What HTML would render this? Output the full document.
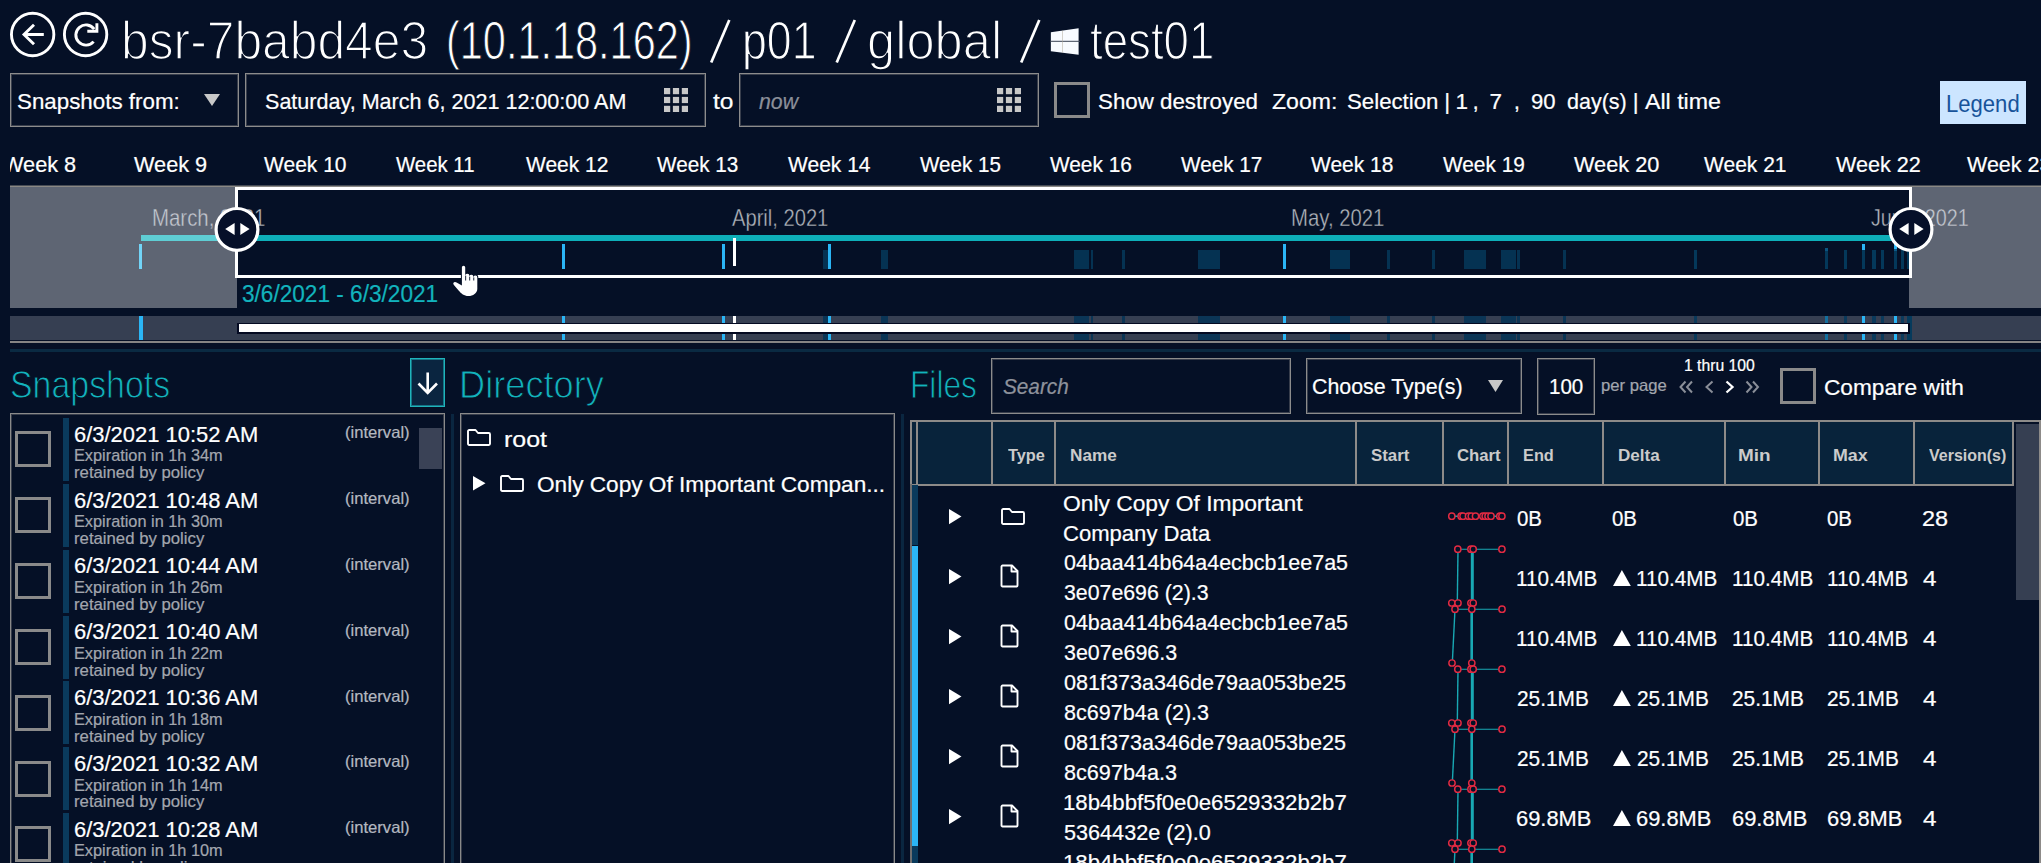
<!DOCTYPE html>
<html><head><meta charset="utf-8"><title>Snapshots</title><style>
html,body{margin:0;padding:0;}
html{width:2041px;height:863px;overflow:hidden;background:#051026;}
body{width:2041px;height:863px;overflow:hidden;background:#051026;position:relative;font-family:"Liberation Sans",sans-serif;}
.a{position:absolute;box-sizing:border-box;}
.t{position:absolute;white-space:pre;transform-origin:0 0;}
svg{position:absolute;overflow:visible;}
</style></head><body>
<div class="a" style="left:0;top:0;width:2041px;height:863px;overflow:hidden;">
<svg style="left:0;top:0" width="120" height="70" viewBox="0 0 120 70" fill="none" stroke="#fff" stroke-width="2.9">
<circle cx="32.65" cy="34.5" r="21.2"/>
<path d="M43.8 34.5H24.2M34 24.7L24 34.5L34 44.2" stroke-linejoin="miter"/>
<circle cx="85.6" cy="34.5" r="21.2"/>
<path d="M93.6 41.6A10.1 10.1 0 1 1 94.2 29.2"/>
<path d="M96.9 23.2V31.3H87.3"/>
</svg>
<span class="t" id="t1" style="left:121.14px;top:10px;font-size:54px;line-height:60px;color:#fff;-webkit-text-stroke:1.6px #051026;transform:scaleX(0.9216);">bsr-7babd4e3</span>
<span class="t" id="t2" style="left:445.56px;top:10px;font-size:54px;line-height:60px;color:#fff;-webkit-text-stroke:1.0px #051026;transform:scaleX(0.7676);">(10.1.18.162)</span>
<span class="t" id="t3" style="left:742.21px;top:10px;font-size:54px;line-height:60px;color:#fff;-webkit-text-stroke:1.3px #051026;transform:scaleX(0.8281);">p01</span>
<span class="t" id="t4" style="left:867.17px;top:10px;font-size:54px;line-height:60px;color:#fff;-webkit-text-stroke:1.6px #051026;transform:scaleX(0.9379);">global</span>
<svg style="left:0;top:0" width="1100" height="70" stroke="#fff" stroke-width="2.7" fill="none"><path d="M711.2 62.5L729.3 20"/><path d="M836.7 62.5L854.8 20"/><path d="M1021.2 62.5L1039.3 20"/></svg>
<svg style="left:1050px;top:27px" width="30" height="29" viewBox="1050 27 30 29">
<polygon points="1050.85,32.2 1078.6,28.2 1078.6,54.8 1050.85,51.3" fill="#f8fbff"/>
<rect x="1050" y="40.8" width="30" height="1" fill="#3a4254"/>
<rect x="1062.5" y="30.6" width="0.5" height="22.2" fill="#b0a898"/>
</svg>
<span class="t" id="t5" style="left:1089.8px;top:10px;font-size:54px;line-height:60px;color:#fff;-webkit-text-stroke:1.4px #051026;transform:scaleX(0.8453);">test01</span>
<div class="a" style="left:10px;top:73px;width:229px;height:54px;border:1px solid #8c8c8c;box-shadow:inset 0 0 0 1px rgba(140,140,140,0.38);"></div>
<span class="t" id="t6" style="left:17.3px;top:89px;font-size:22.5px;line-height:25px;color:#fff;-webkit-text-stroke:0.22px #fff;transform:scaleX(0.9932);">Snapshots from:</span>
<svg style="left:204px;top:94px" width="16" height="12"><polygon points="0,0 16,0 8,12" fill="#c8c8c8"/></svg>
<div class="a" style="left:245px;top:73px;width:461px;height:54px;border:1px solid #8c8c8c;box-shadow:inset 0 0 0 1px rgba(140,140,140,0.38);"></div>
<span class="t" id="t7" style="left:264.83px;top:89px;font-size:22.5px;line-height:25px;color:#fff;-webkit-text-stroke:0.22px #fff;transform:scaleX(0.9579);">Saturday, March 6, 2021 12:00:00 AM</span>
<svg style="left:664.3px;top:88px" width="25" height="25" fill="#c8c8c8"><rect x="0.0" y="0.0" width="6.2" height="6.2"/><rect x="0.0" y="8.9" width="6.2" height="6.2"/><rect x="0.0" y="17.8" width="6.2" height="6.2"/><rect x="8.9" y="0.0" width="6.2" height="6.2"/><rect x="8.9" y="8.9" width="6.2" height="6.2"/><rect x="8.9" y="17.8" width="6.2" height="6.2"/><rect x="17.8" y="0.0" width="6.2" height="6.2"/><rect x="17.8" y="8.9" width="6.2" height="6.2"/><rect x="17.8" y="17.8" width="6.2" height="6.2"/></svg>
<span class="t" id="t8" style="left:713.0px;top:89px;font-size:22.5px;line-height:25px;color:#fff;-webkit-text-stroke:0.22px #fff;transform:scaleX(1.0923);">to</span>
<div class="a" style="left:739px;top:73px;width:300px;height:54px;border:1px solid #8c8c8c;box-shadow:inset 0 0 0 1px rgba(140,140,140,0.38);"></div>
<span class="t" id="t9" style="left:759.17px;top:89px;font-size:22.5px;line-height:25px;color:#8b8f99;font-style:italic;-webkit-text-stroke:0.22px #8b8f99;transform:scaleX(0.9467);">now</span>
<svg style="left:996.7px;top:88px" width="25" height="25" fill="#c8c8c8"><rect x="0.0" y="0.0" width="6.2" height="6.2"/><rect x="0.0" y="8.9" width="6.2" height="6.2"/><rect x="0.0" y="17.8" width="6.2" height="6.2"/><rect x="8.9" y="0.0" width="6.2" height="6.2"/><rect x="8.9" y="8.9" width="6.2" height="6.2"/><rect x="8.9" y="17.8" width="6.2" height="6.2"/><rect x="17.8" y="0.0" width="6.2" height="6.2"/><rect x="17.8" y="8.9" width="6.2" height="6.2"/><rect x="17.8" y="17.8" width="6.2" height="6.2"/></svg>
<div class="a" style="left:1054px;top:82px;width:36px;height:35.5px;border:3px solid #8a8a8a;"></div>
<span class="t" id="t10" style="left:1098.3px;top:89px;font-size:22.5px;line-height:25px;color:#fff;-webkit-text-stroke:0.22px #fff;transform:scaleX(0.9913);">Show destroyed</span>
<span class="t" id="t11" style="left:1271.78px;top:89px;font-size:22.5px;line-height:25px;color:#fff;-webkit-text-stroke:0.22px #fff;transform:scaleX(1.0241);">Zoom:</span>
<span class="t" id="t12" style="left:1347.31px;top:89px;font-size:22.5px;line-height:25px;color:#fff;-webkit-text-stroke:0.22px #fff;transform:scaleX(0.9879);">Selection</span>
<span class="t" id="t13" style="left:1444.24px;top:89px;font-size:22.5px;line-height:25px;color:#fff;-webkit-text-stroke:0.22px #fff;">|</span>
<span class="t" id="t14" style="left:1455.59px;top:89px;font-size:22.5px;line-height:25px;color:#fff;-webkit-text-stroke:0.22px #fff;">1</span>
<span class="t" id="t15" style="left:1472.54px;top:89px;font-size:22.5px;line-height:25px;color:#fff;-webkit-text-stroke:0.22px #fff;">,</span>
<span class="t" id="t16" style="left:1489.45px;top:89px;font-size:22.5px;line-height:25px;color:#fff;-webkit-text-stroke:0.22px #fff;">7</span>
<span class="t" id="t17" style="left:1513.74px;top:89px;font-size:22.5px;line-height:25px;color:#fff;-webkit-text-stroke:0.22px #fff;">,</span>
<span class="t" id="t18" style="left:1531.46px;top:89px;font-size:22.5px;line-height:25px;color:#fff;-webkit-text-stroke:0.22px #fff;transform:scaleX(0.9824);">90</span>
<span class="t" id="t19" style="left:1567.33px;top:89px;font-size:22.5px;line-height:25px;color:#fff;-webkit-text-stroke:0.22px #fff;transform:scaleX(0.9564);">day(s)</span>
<span class="t" id="t20" style="left:1632.84px;top:89px;font-size:22.5px;line-height:25px;color:#fff;-webkit-text-stroke:0.22px #fff;">|</span>
<span class="t" id="t21" style="left:1644.5px;top:89px;font-size:22.5px;line-height:25px;color:#fff;-webkit-text-stroke:0.22px #fff;transform:scaleX(1.0295);">All time</span>
<div class="a" style="left:1940px;top:81px;width:86px;height:42.5px;background:#cce5ff;"></div>
<span class="t" id="t22" style="left:1946.08px;top:91px;font-size:23px;line-height:26px;color:#17539a;-webkit-text-stroke:0px #000;transform:scaleX(0.9598);">Legend</span>
<div class="a" style="left:10px;top:145px;width:200px;height:40px;overflow:hidden;"><span class="t" id="t23" style="left:-7.0px;top:7px;font-size:22px;line-height:25px;color:#fff;-webkit-text-stroke:0.22px #fff;transform:scaleX(0.9864);">Week 8</span></div>
<span class="t" id="t24" style="left:133.75px;top:152px;font-size:22px;line-height:25px;color:#fff;-webkit-text-stroke:0.22px #fff;transform:scaleX(0.9864);">Week 9</span>
<span class="t" id="t25" style="left:264.0px;top:152px;font-size:22px;line-height:25px;color:#fff;-webkit-text-stroke:0.22px #fff;transform:scaleX(0.9549);">Week 10</span>
<span class="t" id="t26" style="left:395.5px;top:152px;font-size:22px;line-height:25px;color:#fff;-webkit-text-stroke:0.22px #fff;transform:scaleX(0.9261);">Week 11</span>
<span class="t" id="t27" style="left:526.0px;top:152px;font-size:22px;line-height:25px;color:#fff;-webkit-text-stroke:0.22px #fff;transform:scaleX(0.9529);">Week 12</span>
<span class="t" id="t28" style="left:657.0px;top:152px;font-size:22px;line-height:25px;color:#fff;-webkit-text-stroke:0.22px #fff;transform:scaleX(0.9412);">Week 13</span>
<span class="t" id="t29" style="left:787.5px;top:152px;font-size:22px;line-height:25px;color:#fff;-webkit-text-stroke:0.22px #fff;transform:scaleX(0.9549);">Week 14</span>
<span class="t" id="t30" style="left:919.5px;top:152px;font-size:22px;line-height:25px;color:#fff;-webkit-text-stroke:0.22px #fff;transform:scaleX(0.9354);">Week 15</span>
<span class="t" id="t31" style="left:1050.0px;top:152px;font-size:22px;line-height:25px;color:#fff;-webkit-text-stroke:0.22px #fff;transform:scaleX(0.9470);">Week 16</span>
<span class="t" id="t32" style="left:1180.5px;top:152px;font-size:22px;line-height:25px;color:#fff;-webkit-text-stroke:0.22px #fff;transform:scaleX(0.9412);">Week 17</span>
<span class="t" id="t33" style="left:1311.0px;top:152px;font-size:22px;line-height:25px;color:#fff;-webkit-text-stroke:0.22px #fff;transform:scaleX(0.9529);">Week 18</span>
<span class="t" id="t34" style="left:1442.5px;top:152px;font-size:22px;line-height:25px;color:#fff;-webkit-text-stroke:0.22px #fff;transform:scaleX(0.9470);">Week 19</span>
<span class="t" id="t35" style="left:1573.5px;top:152px;font-size:22px;line-height:25px;color:#fff;-webkit-text-stroke:0.22px #fff;transform:scaleX(0.9875);">Week 20</span>
<span class="t" id="t36" style="left:1704.0px;top:152px;font-size:22px;line-height:25px;color:#fff;-webkit-text-stroke:0.22px #fff;transform:scaleX(0.9552);">Week 21</span>
<span class="t" id="t37" style="left:1835.5px;top:152px;font-size:22px;line-height:25px;color:#fff;-webkit-text-stroke:0.22px #fff;transform:scaleX(0.9821);">Week 22</span>
<span class="t" id="t38" style="left:1966.5px;top:152px;font-size:22px;line-height:25px;color:#fff;-webkit-text-stroke:0.22px #fff;transform:scaleX(0.9763);">Week 23</span>
<span class="t" id="t39" style="left:152.41px;top:204px;font-size:24px;line-height:27px;color:#b0b4bc;-webkit-text-stroke:0.35px #051026;transform:scaleX(0.8502);">March, 2021</span>
<span class="t" id="t40" style="left:732.0px;top:204px;font-size:24px;line-height:27px;color:#b0b4bc;-webkit-text-stroke:0.35px #051026;transform:scaleX(0.8394);">April, 2021</span>
<span class="t" id="t41" style="left:1291.41px;top:204px;font-size:24px;line-height:27px;color:#b0b4bc;-webkit-text-stroke:0.35px #051026;transform:scaleX(0.8470);">May, 2021</span>
<span class="t" id="t42" style="left:1870.69px;top:204px;font-size:24px;line-height:27px;color:#b0b4bc;-webkit-text-stroke:0.35px #051026;transform:scaleX(0.8218);">June, 2021</span>
<div class="a" style="left:10px;top:185px;width:2031px;height:1px;background:rgba(138,136,132,0.5);"></div>
<div class="a" style="left:10px;top:186px;width:2031px;height:1px;background:#8a8884;"></div>
<div class="a" style="left:10px;top:187px;width:227px;height:121px;background:#5e6573;"></div>
<div class="a" style="left:1909px;top:187px;width:132px;height:121px;background:#5e6573;"></div>
<div class="a" style="left:10px;top:187px;width:227px;height:100px;overflow:hidden;"><span class="t" id="t43" style="left:142.41px;top:17px;font-size:24px;line-height:27px;color:#c4c8d0;-webkit-text-stroke:0.35px #5e6573;transform:scaleX(0.8502);">March, 2021</span></div>
<div class="a" style="left:1909px;top:187px;width:132px;height:100px;overflow:hidden;"><span class="t" id="t44" style="left:-38.31px;top:17px;font-size:24px;line-height:27px;color:#c4c8d0;-webkit-text-stroke:0.35px #5e6573;transform:scaleX(0.8218);">June, 2021</span></div>
<div class="a" style="left:141px;top:234.7px;width:96px;height:6.3px;background:#5fcdd4;"></div>
<div class="a" style="left:237px;top:234.7px;width:1672px;height:6.3px;background:#0eafb9;"></div>
<div class="a" style="left:139px;top:244px;width:3.2px;height:25px;background:#72d4f7;"></div>
<div class="a" style="left:562px;top:244px;width:3.2px;height:25px;background:#2bb5f5;"></div>
<div class="a" style="left:722px;top:244px;width:3.2px;height:25px;background:#2bb5f5;"></div>
<div class="a" style="left:828px;top:244px;width:3.2px;height:25px;background:#2bb5f5;"></div>
<div class="a" style="left:1283px;top:244px;width:3.2px;height:25px;background:#2bb5f5;"></div>
<div class="a" style="left:733px;top:238px;width:3.2px;height:28px;background:#fff;"></div>
<div class="a" style="left:822.5px;top:250px;width:5.5px;height:19px;background:#053252;"></div>
<div class="a" style="left:881px;top:250px;width:6.5px;height:19px;background:#053252;"></div>
<div class="a" style="left:1074px;top:250px;width:15px;height:19px;background:#053252;"></div>
<div class="a" style="left:1090.5px;top:250px;width:2.5px;height:19px;background:#053252;"></div>
<div class="a" style="left:1122px;top:250px;width:3px;height:19px;background:#053252;"></div>
<div class="a" style="left:1198px;top:250px;width:22px;height:19px;background:#053252;"></div>
<div class="a" style="left:1330px;top:250px;width:20px;height:19px;background:#053252;"></div>
<div class="a" style="left:1387px;top:250px;width:3px;height:19px;background:#053252;"></div>
<div class="a" style="left:1432px;top:250px;width:3px;height:19px;background:#053252;"></div>
<div class="a" style="left:1464px;top:250px;width:22px;height:19px;background:#053252;"></div>
<div class="a" style="left:1501px;top:250px;width:15px;height:19px;background:#053252;"></div>
<div class="a" style="left:1517px;top:250px;width:3px;height:19px;background:#053252;"></div>
<div class="a" style="left:1563px;top:250px;width:3px;height:19px;background:#053252;"></div>
<div class="a" style="left:1694px;top:250px;width:3px;height:19px;background:#04385a;"></div>
<div class="a" style="left:1825px;top:250px;width:3px;height:19px;background:#04385a;"></div>
<div class="a" style="left:1844px;top:250px;width:3px;height:19px;background:#04385a;"></div>
<div class="a" style="left:1862px;top:250px;width:3px;height:19px;background:#04385a;"></div>
<div class="a" style="left:1872px;top:250px;width:4px;height:19px;background:#04385a;"></div>
<div class="a" style="left:1881px;top:250px;width:3px;height:19px;background:#04385a;"></div>
<div class="a" style="left:1894px;top:250px;width:3px;height:19px;background:#04385a;"></div>
<div class="a" style="left:1901px;top:250px;width:3px;height:19px;background:#04385a;"></div>
<div class="a" style="left:1907px;top:250px;width:2.5px;height:19px;background:#04385a;"></div>
<div class="a" style="left:1825px;top:248px;width:3px;height:2.5px;background:#0b5580;"></div>
<div class="a" style="left:1862px;top:244px;width:3px;height:6px;background:#2bb5f5;"></div>
<div class="a" style="left:1894px;top:244px;width:3px;height:4.5px;background:#2bb5f5;"></div>
<div class="a" style="left:1894px;top:248.5px;width:3px;height:2.0px;background:#0c5c88;"></div>
<div class="a" style="left:235px;top:187px;width:1677px;height:90.5px;border:3.3px solid #fff;"></div>
<span class="t" id="t45" style="left:242.29px;top:281px;font-size:23.5px;line-height:26px;color:#12b3bd;-webkit-text-stroke:0.22px #12b3bd;transform:scaleX(0.9622);">3/6/2021 - 6/3/2021</span>
<svg style="left:211.5px;top:204.2px" width="50" height="50" viewBox="-25 -25 50 50">
<circle r="20.9" cy="0.4" fill="#061029" stroke="#fff" stroke-width="3.2"/>
<polygon points="-11.8,0 -2.4,-6.1 -2.4,6.1" fill="#fff"/><polygon points="12.6,0 3.3,-6.1 3.3,6.1" fill="#fff"/></svg>
<svg style="left:1885.5px;top:204.2px" width="50" height="50" viewBox="-25 -25 50 50">
<circle r="20.9" cy="0.4" fill="#061029" stroke="#fff" stroke-width="3.2"/>
<polygon points="-11.8,0 -2.4,-6.1 -2.4,6.1" fill="#fff"/><polygon points="12.6,0 3.3,-6.1 3.3,6.1" fill="#fff"/></svg>
<div class="a" style="left:10px;top:316px;width:2031px;height:24px;background:#363f52;"></div>
<div class="a" style="left:10px;top:341px;width:2031px;height:2px;background:#858585;"></div>
<div class="a" style="left:10px;top:348.5px;width:2031px;height:3px;background:#0a2a42;"></div>
<div class="a" style="left:822.5px;top:316px;width:5.5px;height:24px;background:#0b3556;"></div>
<div class="a" style="left:881px;top:316px;width:6.5px;height:24px;background:#0b3556;"></div>
<div class="a" style="left:1074px;top:316px;width:15px;height:24px;background:#0b3556;"></div>
<div class="a" style="left:1090.5px;top:316px;width:2.5px;height:24px;background:#0b3556;"></div>
<div class="a" style="left:1122px;top:316px;width:3px;height:24px;background:#0b3556;"></div>
<div class="a" style="left:1198px;top:316px;width:22px;height:24px;background:#0b3556;"></div>
<div class="a" style="left:1330px;top:316px;width:20px;height:24px;background:#0b3556;"></div>
<div class="a" style="left:1387px;top:316px;width:3px;height:24px;background:#0b3556;"></div>
<div class="a" style="left:1432px;top:316px;width:3px;height:24px;background:#0b3556;"></div>
<div class="a" style="left:1464px;top:316px;width:22px;height:24px;background:#0b3556;"></div>
<div class="a" style="left:1501px;top:316px;width:15px;height:24px;background:#0b3556;"></div>
<div class="a" style="left:1517px;top:316px;width:3px;height:24px;background:#0b3556;"></div>
<div class="a" style="left:1563px;top:316px;width:3px;height:24px;background:#0b3556;"></div>
<div class="a" style="left:1694px;top:316px;width:3px;height:24px;background:#0b3a5c;"></div>
<div class="a" style="left:1825px;top:316px;width:3px;height:24px;background:#0b3a5c;"></div>
<div class="a" style="left:1844px;top:316px;width:3px;height:24px;background:#0b3a5c;"></div>
<div class="a" style="left:1862px;top:316px;width:3px;height:24px;background:#0b3a5c;"></div>
<div class="a" style="left:1872px;top:316px;width:4px;height:24px;background:#0b3a5c;"></div>
<div class="a" style="left:1881px;top:316px;width:3px;height:24px;background:#0b3a5c;"></div>
<div class="a" style="left:1894px;top:316px;width:3px;height:24px;background:#0b3a5c;"></div>
<div class="a" style="left:1901px;top:316px;width:3px;height:24px;background:#0b3a5c;"></div>
<div class="a" style="left:1907px;top:316px;width:2.5px;height:24px;background:#0b3a5c;"></div>
<div class="a" style="left:139px;top:316px;width:3.5px;height:24px;background:#2bb5f5;"></div>
<div class="a" style="left:562px;top:316px;width:3.2px;height:24px;background:#2bb5f5;"></div>
<div class="a" style="left:722px;top:316px;width:3.2px;height:24px;background:#2bb5f5;"></div>
<div class="a" style="left:828px;top:316px;width:3.2px;height:24px;background:#2bb5f5;"></div>
<div class="a" style="left:1283px;top:316px;width:3.2px;height:24px;background:#2bb5f5;"></div>
<div class="a" style="left:1862px;top:316px;width:3.2px;height:24px;background:#2bb5f5;"></div>
<div class="a" style="left:1894px;top:316px;width:3.2px;height:24px;background:#2bb5f5;"></div>
<div class="a" style="left:733px;top:316px;width:3.2px;height:24px;background:#fff;"></div>
<div class="a" style="left:1907px;top:316px;width:5px;height:24px;background:#053a5c;"></div>
<div class="a" style="left:1825px;top:316px;width:3px;height:24px;background:#146f9e;"></div>
<div class="a" style="left:237px;top:322.5px;width:1673px;height:11.3px;background:#040a22;"></div>
<div class="a" style="left:238.7px;top:324px;width:1669.5px;height:8px;background:#fff;"></div>
<svg style="left:445px;top:260px" width="40" height="42" viewBox="445 260 40 42">
<path d="M461.9 267.3Q461.9 265.7 463.55 265.7Q465.2 265.7 465.2 267.3V275.2Q465.7 273.8 467.5 273.8Q469.4 273.8 469.4 276Q469.9 274.7 471.5 274.7Q473.4 274.7 473.4 276.9Q473.9 275.6 475.6 275.6Q477.3 275.6 477.3 277.4V289C477.3 293 473 296.1 468.4 296.1C464 296.1 461.2 293.6 458.6 290.6L453.7 284.7Q452.6 283.1 454 282.2Q455.2 281.5 456.6 282.4L461.9 285.4Z" fill="#fff" stroke="#051026" stroke-width="2" paint-order="stroke" stroke-linejoin="round"/>
<path d="M465.65 275.6V280.5M469.7 276.6V280.5M473.75 277.4V280.5" stroke="#051026" stroke-width="0.9" fill="none"/>
</svg>
<span class="t" id="t46" style="left:9.94px;top:362px;font-size:39.5px;line-height:44px;color:#12b3bd;-webkit-text-stroke:1.0px #051026;transform:scaleX(0.8578);">Snapshots</span>
<div class="a" style="left:410px;top:358px;width:35px;height:49px;background:#0a2540;border:1px solid #1fb4bb;box-shadow:inset 0 0 0 1px rgba(31,180,187,0.55);"></div>
<svg style="left:410px;top:358px" width="36" height="49" fill="none" stroke="#fff" stroke-width="2.6"><path d="M17.7 14.500V35M8.500 25.500L17.7 35L27 25.500"/></svg>
<span class="t" id="t47" style="left:459.17px;top:362px;font-size:39.5px;line-height:44px;color:#12b3bd;-webkit-text-stroke:1.0px #051026;transform:scaleX(0.9165);">Directory</span>
<span class="t" id="t48" style="left:909.52px;top:362px;font-size:39.5px;line-height:44px;color:#12b3bd;-webkit-text-stroke:1.0px #051026;transform:scaleX(0.8030);">Files</span>
<div class="a" style="left:10px;top:413px;width:435px;height:460px;border:1px solid #8a8a8a;box-shadow:inset 0 0 0 1px rgba(138,138,138,0.38);"></div>
<div class="a" style="left:451px;top:414px;width:3px;height:460px;background:#0a2640;"></div>
<div class="a" style="left:63px;top:418px;width:6px;height:63px;background:#0a3a5c;"></div>
<div class="a" style="left:15px;top:431px;width:36px;height:36px;border:3px solid #8a8a8a;"></div>
<span class="t" id="t49" style="left:74.27px;top:421px;font-size:22.8px;line-height:26px;color:#fff;-webkit-text-stroke:0.22px #fff;transform:scaleX(0.9628);">6/3/2021 10:52 AM</span>
<span class="t" id="t50" style="left:74.03px;top:446px;font-size:17px;line-height:19px;color:#a2a6ae;-webkit-text-stroke:0.22px #a2a6ae;transform:scaleX(0.9590);">Expiration in 1h 34m</span>
<span class="t" id="t51" style="left:74.25px;top:463px;font-size:17px;line-height:19px;color:#a2a6ae;-webkit-text-stroke:0.22px #a2a6ae;transform:scaleX(0.9845);">retained by policy</span>
<span class="t" id="t52" style="left:345.22px;top:423px;font-size:16.5px;line-height:18px;color:#b4b8c0;-webkit-text-stroke:0.22px #b4b8c0;transform:scaleX(1.0072);">(interval)</span>
<div class="a" style="left:63px;top:484px;width:6px;height:63px;background:#0a3a5c;"></div>
<div class="a" style="left:15px;top:497px;width:36px;height:36px;border:3px solid #8a8a8a;"></div>
<span class="t" id="t53" style="left:74.27px;top:487px;font-size:22.8px;line-height:26px;color:#fff;-webkit-text-stroke:0.22px #fff;transform:scaleX(0.9628);">6/3/2021 10:48 AM</span>
<span class="t" id="t54" style="left:74.03px;top:512px;font-size:17px;line-height:19px;color:#a2a6ae;-webkit-text-stroke:0.22px #a2a6ae;transform:scaleX(0.9590);">Expiration in 1h 30m</span>
<span class="t" id="t55" style="left:74.25px;top:529px;font-size:17px;line-height:19px;color:#a2a6ae;-webkit-text-stroke:0.22px #a2a6ae;transform:scaleX(0.9845);">retained by policy</span>
<span class="t" id="t56" style="left:345.22px;top:489px;font-size:16.5px;line-height:18px;color:#b4b8c0;-webkit-text-stroke:0.22px #b4b8c0;transform:scaleX(1.0072);">(interval)</span>
<div class="a" style="left:63px;top:550px;width:6px;height:63px;background:#0a3a5c;"></div>
<div class="a" style="left:15px;top:563px;width:36px;height:36px;border:3px solid #8a8a8a;"></div>
<span class="t" id="t57" style="left:74.27px;top:552px;font-size:22.8px;line-height:26px;color:#fff;-webkit-text-stroke:0.22px #fff;transform:scaleX(0.9628);">6/3/2021 10:44 AM</span>
<span class="t" id="t58" style="left:74.03px;top:578px;font-size:17px;line-height:19px;color:#a2a6ae;-webkit-text-stroke:0.22px #a2a6ae;transform:scaleX(0.9590);">Expiration in 1h 26m</span>
<span class="t" id="t59" style="left:74.25px;top:595px;font-size:17px;line-height:19px;color:#a2a6ae;-webkit-text-stroke:0.22px #a2a6ae;transform:scaleX(0.9845);">retained by policy</span>
<span class="t" id="t60" style="left:345.22px;top:555px;font-size:16.5px;line-height:18px;color:#b4b8c0;-webkit-text-stroke:0.22px #b4b8c0;transform:scaleX(1.0072);">(interval)</span>
<div class="a" style="left:63px;top:616px;width:6px;height:63px;background:#0a3a5c;"></div>
<div class="a" style="left:15px;top:629px;width:36px;height:36px;border:3px solid #8a8a8a;"></div>
<span class="t" id="t61" style="left:74.27px;top:618px;font-size:22.8px;line-height:26px;color:#fff;-webkit-text-stroke:0.22px #fff;transform:scaleX(0.9628);">6/3/2021 10:40 AM</span>
<span class="t" id="t62" style="left:74.03px;top:644px;font-size:17px;line-height:19px;color:#a2a6ae;-webkit-text-stroke:0.22px #a2a6ae;transform:scaleX(0.9590);">Expiration in 1h 22m</span>
<span class="t" id="t63" style="left:74.25px;top:661px;font-size:17px;line-height:19px;color:#a2a6ae;-webkit-text-stroke:0.22px #a2a6ae;transform:scaleX(0.9845);">retained by policy</span>
<span class="t" id="t64" style="left:345.22px;top:621px;font-size:16.5px;line-height:18px;color:#b4b8c0;-webkit-text-stroke:0.22px #b4b8c0;transform:scaleX(1.0072);">(interval)</span>
<div class="a" style="left:63px;top:681px;width:6px;height:63px;background:#0a3a5c;"></div>
<div class="a" style="left:15px;top:695px;width:36px;height:36px;border:3px solid #8a8a8a;"></div>
<span class="t" id="t65" style="left:74.27px;top:684px;font-size:22.8px;line-height:26px;color:#fff;-webkit-text-stroke:0.22px #fff;transform:scaleX(0.9628);">6/3/2021 10:36 AM</span>
<span class="t" id="t66" style="left:74.03px;top:710px;font-size:17px;line-height:19px;color:#a2a6ae;-webkit-text-stroke:0.22px #a2a6ae;transform:scaleX(0.9590);">Expiration in 1h 18m</span>
<span class="t" id="t67" style="left:74.25px;top:727px;font-size:17px;line-height:19px;color:#a2a6ae;-webkit-text-stroke:0.22px #a2a6ae;transform:scaleX(0.9845);">retained by policy</span>
<span class="t" id="t68" style="left:345.22px;top:687px;font-size:16.5px;line-height:18px;color:#b4b8c0;-webkit-text-stroke:0.22px #b4b8c0;transform:scaleX(1.0072);">(interval)</span>
<div class="a" style="left:63px;top:747px;width:6px;height:63px;background:#0a3a5c;"></div>
<div class="a" style="left:15px;top:761px;width:36px;height:36px;border:3px solid #8a8a8a;"></div>
<span class="t" id="t69" style="left:74.27px;top:750px;font-size:22.8px;line-height:26px;color:#fff;-webkit-text-stroke:0.22px #fff;transform:scaleX(0.9628);">6/3/2021 10:32 AM</span>
<span class="t" id="t70" style="left:74.03px;top:776px;font-size:17px;line-height:19px;color:#a2a6ae;-webkit-text-stroke:0.22px #a2a6ae;transform:scaleX(0.9590);">Expiration in 1h 14m</span>
<span class="t" id="t71" style="left:74.25px;top:792px;font-size:17px;line-height:19px;color:#a2a6ae;-webkit-text-stroke:0.22px #a2a6ae;transform:scaleX(0.9845);">retained by policy</span>
<span class="t" id="t72" style="left:345.22px;top:752px;font-size:16.5px;line-height:18px;color:#b4b8c0;-webkit-text-stroke:0.22px #b4b8c0;transform:scaleX(1.0072);">(interval)</span>
<div class="a" style="left:63px;top:813px;width:6px;height:63px;background:#0a3a5c;"></div>
<div class="a" style="left:15px;top:826px;width:36px;height:36px;border:3px solid #8a8a8a;"></div>
<span class="t" id="t73" style="left:74.27px;top:816px;font-size:22.8px;line-height:26px;color:#fff;-webkit-text-stroke:0.22px #fff;transform:scaleX(0.9628);">6/3/2021 10:28 AM</span>
<span class="t" id="t74" style="left:74.03px;top:841px;font-size:17px;line-height:19px;color:#a2a6ae;-webkit-text-stroke:0.22px #a2a6ae;transform:scaleX(0.9590);">Expiration in 1h 10m</span>
<span class="t" id="t75" style="left:74.25px;top:858px;font-size:17px;line-height:19px;color:#a2a6ae;-webkit-text-stroke:0.22px #a2a6ae;transform:scaleX(0.9845);">retained by policy</span>
<span class="t" id="t76" style="left:345.22px;top:818px;font-size:16.5px;line-height:18px;color:#b4b8c0;-webkit-text-stroke:0.22px #b4b8c0;transform:scaleX(1.0072);">(interval)</span>
<div class="a" style="left:419px;top:428px;width:23px;height:41px;background:#3a4256;"></div>
<div class="a" style="left:460px;top:413px;width:435px;height:460px;border:1px solid #8a8a8a;box-shadow:inset 0 0 0 1px rgba(138,138,138,0.38);"></div>
<div class="a" style="left:901px;top:414px;width:3px;height:460px;background:#0a2640;"></div>
<svg style="left:466px;top:428px" width="26" height="19" viewBox="-1 -1 26 19" fill="none" stroke="#fff" stroke-width="1.9" stroke-linejoin="round"><path d="M1 2.200C1 1.500 1.500 1 2.200 1H8.500L11 4H21.8C22.5 4 23 4.500 23 5.200V14.8C23 15.5 22.5 16 21.8 16H2.200C1.500 16 1 15.5 1 14.8Z"/></svg>
<span class="t" id="t77" style="left:503.94px;top:427px;font-size:22px;line-height:25px;color:#fff;-webkit-text-stroke:0.22px #fff;transform:scaleX(1.1336);">root</span>
<svg style="left:473px;top:476.3px" width="13" height="15"><polygon points="0,0 12.500,7.200 0,14.400" fill="#fff"/></svg>
<svg style="left:499.3px;top:474px" width="26" height="19" viewBox="-1 -1 26 19" fill="none" stroke="#fff" stroke-width="1.9" stroke-linejoin="round"><path d="M1 2.200C1 1.500 1.500 1 2.200 1H8.500L11 4H21.8C22.5 4 23 4.500 23 5.200V14.8C23 15.5 22.5 16 21.8 16H2.200C1.500 16 1 15.5 1 14.8Z"/></svg>
<span class="t" id="t78" style="left:536.94px;top:472px;font-size:22.5px;line-height:25px;color:#fff;-webkit-text-stroke:0.22px #fff;transform:scaleX(1.0049);">Only Copy Of Important Compan...</span>
<div class="a" style="left:991px;top:358px;width:300px;height:56px;border:1px solid #8c8c8c;box-shadow:inset 0 0 0 1px rgba(140,140,140,0.38);"></div>
<span class="t" id="t79" style="left:1003.43px;top:374px;font-size:22.5px;line-height:25px;color:#8e929c;font-style:italic;-webkit-text-stroke:0.22px #8e929c;transform:scaleX(0.9211);">Search</span>
<div class="a" style="left:1306px;top:358px;width:216px;height:56px;border:1px solid #8c8c8c;box-shadow:inset 0 0 0 1px rgba(140,140,140,0.38);"></div>
<span class="t" id="t80" style="left:1312.0px;top:374px;font-size:22.5px;line-height:25px;color:#fff;-webkit-text-stroke:0.22px #fff;transform:scaleX(0.9502);">Choose Type(s)</span>
<svg style="left:1488px;top:380px" width="16" height="12"><polygon points="0,0 15,0 7.500,12" fill="#c8c8c8"/></svg>
<div class="a" style="left:1537px;top:358px;width:58px;height:57px;border:1px solid #8c8c8c;box-shadow:inset 0 0 0 1px rgba(140,140,140,0.38);"></div>
<span class="t" id="t81" style="left:1549.47px;top:374px;font-size:22.5px;line-height:25px;color:#fff;-webkit-text-stroke:0.22px #fff;transform:scaleX(0.9136);">100</span>
<span class="t" id="t82" style="left:1600.96px;top:376px;font-size:16.5px;line-height:18px;color:#a2a6ae;-webkit-text-stroke:0.22px #a2a6ae;transform:scaleX(1.0089);">per page</span>
<span class="t" id="t83" style="left:1683.52px;top:356px;font-size:16.5px;line-height:18px;color:#fff;-webkit-text-stroke:0.22px #fff;transform:scaleX(0.9538);">1 thru 100</span>
<svg style="left:1678px;top:379px" width="90" height="16" fill="none" stroke-width="2">
<path d="M7.500 2.500L2.500 8L7.500 13.500M14 2.500L9 8L14 13.500" stroke="#8a8e98"/>
<path d="M34.500 2.500L28.500 8L34.500 13.500" stroke="#8a8e98"/>
<path d="M48.500 2.500L54.500 8L48.500 13.500" stroke="#fff" stroke-width="2.300"/>
<path d="M68.500 2.500L73.500 8L68.500 13.500M75 2.500L80 8L75 13.500" stroke="#8a8e98"/>
</svg>
<div class="a" style="left:1780px;top:368px;width:36px;height:36px;border:3px solid #8a8a8a;"></div>
<span class="t" id="t84" style="left:1824.14px;top:375px;font-size:22.5px;line-height:25px;color:#fff;-webkit-text-stroke:0.22px #fff;transform:scaleX(1.0075);">Compare with</span>
<div class="a" style="left:910px;top:420px;width:1104px;height:66px;background:#08233b;border:2px solid #8d8b89;"></div>
<div class="a" style="left:916px;top:421px;width:2px;height:64px;background:#8d8b89;"></div>
<div class="a" style="left:991px;top:421px;width:2px;height:64px;background:#8d8b89;"></div>
<div class="a" style="left:1054px;top:421px;width:2px;height:64px;background:#8d8b89;"></div>
<div class="a" style="left:1355px;top:421px;width:2px;height:64px;background:#8d8b89;"></div>
<div class="a" style="left:1442px;top:421px;width:2px;height:64px;background:#8d8b89;"></div>
<div class="a" style="left:1507px;top:421px;width:2px;height:64px;background:#8d8b89;"></div>
<div class="a" style="left:1602px;top:421px;width:2px;height:64px;background:#8d8b89;"></div>
<div class="a" style="left:1724px;top:421px;width:2px;height:64px;background:#8d8b89;"></div>
<div class="a" style="left:1818px;top:421px;width:2px;height:64px;background:#8d8b89;"></div>
<div class="a" style="left:1913px;top:421px;width:2px;height:64px;background:#8d8b89;"></div>
<div class="a" style="left:910px;top:484px;width:2px;height:390px;background:#6f6f70;"></div>
<span class="t" id="t85" style="left:1007.5px;top:446px;font-size:17px;line-height:19px;color:#cbcbcb;font-weight:700;transform:scaleX(0.9607);">Type</span>
<span class="t" id="t86" style="left:1069.68px;top:446px;font-size:17px;line-height:19px;color:#cbcbcb;font-weight:700;transform:scaleX(1.0097);">Name</span>
<span class="t" id="t87" style="left:1370.74px;top:446px;font-size:17px;line-height:19px;color:#cbcbcb;font-weight:700;transform:scaleX(0.9900);">Start</span>
<span class="t" id="t88" style="left:1457.48px;top:446px;font-size:17px;line-height:19px;color:#cbcbcb;font-weight:700;transform:scaleX(0.9822);">Chart</span>
<span class="t" id="t89" style="left:1522.73px;top:446px;font-size:17px;line-height:19px;color:#cbcbcb;font-weight:700;transform:scaleX(0.9597);">End</span>
<span class="t" id="t90" style="left:1617.68px;top:446px;font-size:17px;line-height:19px;color:#cbcbcb;font-weight:700;transform:scaleX(1.0033);">Delta</span>
<span class="t" id="t91" style="left:1738.32px;top:446px;font-size:17px;line-height:19px;color:#cbcbcb;font-weight:700;transform:scaleX(1.1138);">Min</span>
<span class="t" id="t92" style="left:1832.89px;top:446px;font-size:17px;line-height:19px;color:#cbcbcb;font-weight:700;transform:scaleX(1.0493);">Max</span>
<span class="t" id="t93" style="left:1929.0px;top:446px;font-size:17px;line-height:19px;color:#cbcbcb;font-weight:700;transform:scaleX(0.9402);">Version(s)</span>
<div class="a" style="left:910px;top:420px;width:1131px;height:2px;background:#8d8b89;"></div>
<div class="a" style="left:2016px;top:424px;width:23px;height:176px;background:#363f52;"></div>
<div class="a" style="left:2039px;top:420px;width:2px;height:450px;background:#8d8b89;"></div>
<div class="a" style="left:912px;top:485px;width:6px;height:60px;background:#0a3a5c;"></div>
<div class="a" style="left:912px;top:545.5px;width:6px;height:300.5px;background:#2bb5f5;"></div>
<div class="a" style="left:912px;top:846px;width:6px;height:20px;background:#0a3a5c;"></div>
<span class="t" id="t94" style="left:1063.43px;top:491px;font-size:22.5px;line-height:25px;color:#fff;-webkit-text-stroke:0.22px #fff;transform:scaleX(1.0133);">Only Copy Of Important</span>
<span class="t" id="t95" style="left:1063.47px;top:521px;font-size:22.5px;line-height:25px;color:#fff;-webkit-text-stroke:0.22px #fff;transform:scaleX(0.9805);">Company Data</span>
<svg style="left:949px;top:509.3px" width="13" height="16"><polygon points="0,0 12.500,7.600 0,15.200" fill="#fff"/></svg>
<svg style="left:1000px;top:507px" width="26" height="19" viewBox="-1 -1 26 19" fill="none" stroke="#fff" stroke-width="1.9" stroke-linejoin="round"><path d="M1 2.200C1 1.500 1.500 1 2.200 1H8.500L11 4H21.8C22.5 4 23 4.500 23 5.200V14.8C23 15.5 22.5 16 21.8 16H2.200C1.500 16 1 15.5 1 14.8Z"/></svg>
<span class="t" id="t96" style="left:1516.86px;top:506px;font-size:22.5px;line-height:25px;color:#fff;-webkit-text-stroke:0.22px #fff;transform:scaleX(0.9083);">0B</span>
<span class="t" id="t97" style="left:1611.86px;top:506px;font-size:22.5px;line-height:25px;color:#fff;-webkit-text-stroke:0.22px #fff;transform:scaleX(0.9083);">0B</span>
<span class="t" id="t98" style="left:1732.66px;top:506px;font-size:22.5px;line-height:25px;color:#fff;-webkit-text-stroke:0.22px #fff;transform:scaleX(0.9083);">0B</span>
<span class="t" id="t99" style="left:1827.36px;top:506px;font-size:22.5px;line-height:25px;color:#fff;-webkit-text-stroke:0.22px #fff;transform:scaleX(0.9083);">0B</span>
<span class="t" id="t100" style="left:1921.9px;top:506px;font-size:22.5px;line-height:25px;color:#fff;-webkit-text-stroke:0.22px #fff;transform:scaleX(1.0407);">28</span>
<span class="t" id="t101" style="left:1063.83px;top:550px;font-size:22.5px;line-height:25px;color:#fff;-webkit-text-stroke:0.22px #fff;transform:scaleX(0.9538);">04baa414b64a4ecbcb1ee7a5</span>
<span class="t" id="t102" style="left:1063.83px;top:580px;font-size:22.5px;line-height:25px;color:#fff;-webkit-text-stroke:0.22px #fff;transform:scaleX(0.9470);">3e07e696 (2).3</span>
<svg style="left:949px;top:569px" width="13" height="16"><polygon points="0,0 12.500,7.600 0,15.200" fill="#fff"/></svg>
<svg style="left:999.9px;top:563.8px" width="20" height="24" viewBox="0 0 20 24" fill="none" stroke="#fff" stroke-width="1.900" stroke-linejoin="round"><path d="M2.500 1.500H12L17.500 7V21.500C17.500 22 17 22.500 16.500 22.500H2.500C2 22.500 1.500 22 1.500 21.500V2.500C1.500 2 2 1.500 2.500 1.500Z"/><path d="M11.500 1.500V7.500H17.500"/></svg>
<span class="t" id="t103" style="left:1516.21px;top:566px;font-size:22.5px;line-height:25px;color:#fff;-webkit-text-stroke:0.22px #fff;transform:scaleX(0.9182);">110.4MB</span>
<svg style="left:1613px;top:570.1px" width="20" height="17"><polygon points="8.9,0 17.8,16 0,16" fill="#fff"/></svg>
<span class="t" id="t104" style="left:1636.21px;top:566px;font-size:22.5px;line-height:25px;color:#fff;-webkit-text-stroke:0.22px #fff;transform:scaleX(0.9182);">110.4MB</span>
<span class="t" id="t105" style="left:1732.01px;top:566px;font-size:22.5px;line-height:25px;color:#fff;-webkit-text-stroke:0.22px #fff;transform:scaleX(0.9182);">110.4MB</span>
<span class="t" id="t106" style="left:1826.71px;top:566px;font-size:22.5px;line-height:25px;color:#fff;-webkit-text-stroke:0.22px #fff;transform:scaleX(0.9182);">110.4MB</span>
<span class="t" id="t107" style="left:1922.62px;top:566px;font-size:22.5px;line-height:25px;color:#fff;-webkit-text-stroke:0.22px #fff;transform:scaleX(1.0774);">4</span>
<span class="t" id="t108" style="left:1063.83px;top:610px;font-size:22.5px;line-height:25px;color:#fff;-webkit-text-stroke:0.22px #fff;transform:scaleX(0.9538);">04baa414b64a4ecbcb1ee7a5</span>
<span class="t" id="t109" style="left:1063.83px;top:640px;font-size:22.5px;line-height:25px;color:#fff;-webkit-text-stroke:0.22px #fff;transform:scaleX(0.9509);">3e07e696.3</span>
<svg style="left:949px;top:629px" width="13" height="16"><polygon points="0,0 12.500,7.600 0,15.200" fill="#fff"/></svg>
<svg style="left:999.9px;top:623.8px" width="20" height="24" viewBox="0 0 20 24" fill="none" stroke="#fff" stroke-width="1.900" stroke-linejoin="round"><path d="M2.500 1.500H12L17.500 7V21.500C17.500 22 17 22.500 16.500 22.500H2.500C2 22.500 1.500 22 1.500 21.500V2.500C1.500 2 2 1.500 2.500 1.500Z"/><path d="M11.500 1.500V7.500H17.500"/></svg>
<span class="t" id="t110" style="left:1516.21px;top:626px;font-size:22.5px;line-height:25px;color:#fff;-webkit-text-stroke:0.22px #fff;transform:scaleX(0.9182);">110.4MB</span>
<svg style="left:1613px;top:630.1px" width="20" height="17"><polygon points="8.9,0 17.8,16 0,16" fill="#fff"/></svg>
<span class="t" id="t111" style="left:1636.21px;top:626px;font-size:22.5px;line-height:25px;color:#fff;-webkit-text-stroke:0.22px #fff;transform:scaleX(0.9182);">110.4MB</span>
<span class="t" id="t112" style="left:1732.01px;top:626px;font-size:22.5px;line-height:25px;color:#fff;-webkit-text-stroke:0.22px #fff;transform:scaleX(0.9182);">110.4MB</span>
<span class="t" id="t113" style="left:1826.71px;top:626px;font-size:22.5px;line-height:25px;color:#fff;-webkit-text-stroke:0.22px #fff;transform:scaleX(0.9182);">110.4MB</span>
<span class="t" id="t114" style="left:1922.62px;top:626px;font-size:22.5px;line-height:25px;color:#fff;-webkit-text-stroke:0.22px #fff;transform:scaleX(1.0774);">4</span>
<span class="t" id="t115" style="left:1063.83px;top:670px;font-size:22.5px;line-height:25px;color:#fff;-webkit-text-stroke:0.22px #fff;transform:scaleX(0.9592);">081f373a346de79aa053be25</span>
<span class="t" id="t116" style="left:1063.83px;top:700px;font-size:22.5px;line-height:25px;color:#fff;-webkit-text-stroke:0.22px #fff;transform:scaleX(0.9583);">8c697b4a (2).3</span>
<svg style="left:949px;top:689px" width="13" height="16"><polygon points="0,0 12.500,7.600 0,15.200" fill="#fff"/></svg>
<svg style="left:999.9px;top:683.8px" width="20" height="24" viewBox="0 0 20 24" fill="none" stroke="#fff" stroke-width="1.900" stroke-linejoin="round"><path d="M2.500 1.500H12L17.500 7V21.500C17.500 22 17 22.500 16.500 22.500H2.500C2 22.500 1.500 22 1.500 21.500V2.500C1.500 2 2 1.500 2.500 1.500Z"/><path d="M11.500 1.500V7.500H17.500"/></svg>
<span class="t" id="t117" style="left:1516.52px;top:686px;font-size:22.5px;line-height:25px;color:#fff;-webkit-text-stroke:0.22px #fff;transform:scaleX(0.9266);">25.1MB</span>
<svg style="left:1613px;top:690.1px" width="20" height="17"><polygon points="8.9,0 17.8,16 0,16" fill="#fff"/></svg>
<span class="t" id="t118" style="left:1636.52px;top:686px;font-size:22.5px;line-height:25px;color:#fff;-webkit-text-stroke:0.22px #fff;transform:scaleX(0.9266);">25.1MB</span>
<span class="t" id="t119" style="left:1732.32px;top:686px;font-size:22.5px;line-height:25px;color:#fff;-webkit-text-stroke:0.22px #fff;transform:scaleX(0.9266);">25.1MB</span>
<span class="t" id="t120" style="left:1827.02px;top:686px;font-size:22.5px;line-height:25px;color:#fff;-webkit-text-stroke:0.22px #fff;transform:scaleX(0.9266);">25.1MB</span>
<span class="t" id="t121" style="left:1922.62px;top:686px;font-size:22.5px;line-height:25px;color:#fff;-webkit-text-stroke:0.22px #fff;transform:scaleX(1.0774);">4</span>
<span class="t" id="t122" style="left:1063.83px;top:730px;font-size:22.5px;line-height:25px;color:#fff;-webkit-text-stroke:0.22px #fff;transform:scaleX(0.9592);">081f373a346de79aa053be25</span>
<span class="t" id="t123" style="left:1063.82px;top:760px;font-size:22.5px;line-height:25px;color:#fff;-webkit-text-stroke:0.22px #fff;transform:scaleX(0.9613);">8c697b4a.3</span>
<svg style="left:949px;top:749px" width="13" height="16"><polygon points="0,0 12.500,7.600 0,15.200" fill="#fff"/></svg>
<svg style="left:999.9px;top:743.8px" width="20" height="24" viewBox="0 0 20 24" fill="none" stroke="#fff" stroke-width="1.900" stroke-linejoin="round"><path d="M2.500 1.500H12L17.500 7V21.500C17.500 22 17 22.500 16.500 22.500H2.500C2 22.500 1.500 22 1.500 21.500V2.500C1.500 2 2 1.500 2.500 1.500Z"/><path d="M11.500 1.500V7.500H17.500"/></svg>
<span class="t" id="t124" style="left:1516.52px;top:746px;font-size:22.5px;line-height:25px;color:#fff;-webkit-text-stroke:0.22px #fff;transform:scaleX(0.9266);">25.1MB</span>
<svg style="left:1613px;top:750.1px" width="20" height="17"><polygon points="8.9,0 17.8,16 0,16" fill="#fff"/></svg>
<span class="t" id="t125" style="left:1636.52px;top:746px;font-size:22.5px;line-height:25px;color:#fff;-webkit-text-stroke:0.22px #fff;transform:scaleX(0.9266);">25.1MB</span>
<span class="t" id="t126" style="left:1732.32px;top:746px;font-size:22.5px;line-height:25px;color:#fff;-webkit-text-stroke:0.22px #fff;transform:scaleX(0.9266);">25.1MB</span>
<span class="t" id="t127" style="left:1827.02px;top:746px;font-size:22.5px;line-height:25px;color:#fff;-webkit-text-stroke:0.22px #fff;transform:scaleX(0.9266);">25.1MB</span>
<span class="t" id="t128" style="left:1922.62px;top:746px;font-size:22.5px;line-height:25px;color:#fff;-webkit-text-stroke:0.22px #fff;transform:scaleX(1.0774);">4</span>
<span class="t" id="t129" style="left:1063.11px;top:790px;font-size:22.5px;line-height:25px;color:#fff;-webkit-text-stroke:0.22px #fff;transform:scaleX(0.9861);">18b4bbf5f0e0e6529332b2b7</span>
<span class="t" id="t130" style="left:1063.82px;top:820px;font-size:22.5px;line-height:25px;color:#fff;-webkit-text-stroke:0.22px #fff;transform:scaleX(0.9613);">5364432e (2).0</span>
<svg style="left:949px;top:809px" width="13" height="16"><polygon points="0,0 12.500,7.600 0,15.200" fill="#fff"/></svg>
<svg style="left:999.9px;top:803.8px" width="20" height="24" viewBox="0 0 20 24" fill="none" stroke="#fff" stroke-width="1.900" stroke-linejoin="round"><path d="M2.500 1.500H12L17.500 7V21.500C17.500 22 17 22.500 16.500 22.500H2.500C2 22.500 1.500 22 1.500 21.500V2.500C1.500 2 2 1.500 2.500 1.500Z"/><path d="M11.500 1.500V7.500H17.500"/></svg>
<span class="t" id="t131" style="left:1516.47px;top:806px;font-size:22.5px;line-height:25px;color:#fff;-webkit-text-stroke:0.22px #fff;transform:scaleX(0.9730);">69.8MB</span>
<svg style="left:1613px;top:810.1px" width="20" height="17"><polygon points="8.9,0 17.8,16 0,16" fill="#fff"/></svg>
<span class="t" id="t132" style="left:1636.47px;top:806px;font-size:22.5px;line-height:25px;color:#fff;-webkit-text-stroke:0.22px #fff;transform:scaleX(0.9730);">69.8MB</span>
<span class="t" id="t133" style="left:1732.27px;top:806px;font-size:22.5px;line-height:25px;color:#fff;-webkit-text-stroke:0.22px #fff;transform:scaleX(0.9730);">69.8MB</span>
<span class="t" id="t134" style="left:1826.97px;top:806px;font-size:22.5px;line-height:25px;color:#fff;-webkit-text-stroke:0.22px #fff;transform:scaleX(0.9730);">69.8MB</span>
<span class="t" id="t135" style="left:1922.62px;top:806px;font-size:22.5px;line-height:25px;color:#fff;-webkit-text-stroke:0.22px #fff;transform:scaleX(1.0774);">4</span>
<span class="t" id="t136" style="left:1063.11px;top:850px;font-size:22.5px;line-height:25px;color:#fff;-webkit-text-stroke:0.22px #fff;transform:scaleX(0.9861);">18b4bbf5f0e0e6529332b2b7</span>
<svg style="left:0;top:0" width="2041" height="863" viewBox="0 0 2041 863" fill="none"><path d="M1452 516.200H1501.500" stroke="#19a9b4" stroke-width="1.600"/><circle cx="1451.8" cy="516.2" r="3.15" stroke="#e22a42" stroke-width="1.450" fill="#051026"/><circle cx="1461.1" cy="516.2" r="3.15" stroke="#e22a42" stroke-width="1.450" fill="#051026"/><circle cx="1463" cy="516.2" r="3.15" stroke="#e22a42" stroke-width="1.450" fill="#051026"/><circle cx="1468.5" cy="516.2" r="3.15" stroke="#e22a42" stroke-width="1.450" fill="#051026"/><circle cx="1471.3" cy="516.2" r="3.15" stroke="#e22a42" stroke-width="1.450" fill="#051026"/><circle cx="1475.5" cy="516.2" r="3.15" stroke="#e22a42" stroke-width="1.450" fill="#051026"/><circle cx="1482.8" cy="516.2" r="3.15" stroke="#e22a42" stroke-width="1.450" fill="#051026"/><circle cx="1485.2" cy="516.2" r="3.15" stroke="#e22a42" stroke-width="1.450" fill="#051026"/><circle cx="1488" cy="516.2" r="3.15" stroke="#e22a42" stroke-width="1.450" fill="#051026"/><circle cx="1491" cy="516.2" r="3.15" stroke="#e22a42" stroke-width="1.450" fill="#051026"/><circle cx="1499.8" cy="516.2" r="3.15" stroke="#e22a42" stroke-width="1.450" fill="#051026"/><circle cx="1501.9" cy="516.2" r="3.15" stroke="#e22a42" stroke-width="1.450" fill="#051026"/><path d="M1458 549.2H1502" stroke="#19a9b4" stroke-width="1.100"/><path d="M1458 549.2L1457.300 603" stroke="#19a9b4" stroke-width="1.400"/><path d="M1472.300 549.2V603" stroke="#19a9b4" stroke-width="3"/><circle cx="1457.8" cy="549.2" r="3.15" stroke="#e22a42" stroke-width="1.450" fill="#051026"/><circle cx="1470.9" cy="549.2" r="3.15" stroke="#e22a42" stroke-width="1.450" fill="#051026"/><circle cx="1473.2" cy="549.2" r="3.15" stroke="#e22a42" stroke-width="1.450" fill="#051026"/><circle cx="1501.9" cy="549.2" r="3.15" stroke="#e22a42" stroke-width="1.450" fill="#051026"/><circle cx="1451.8" cy="603" r="3.15" stroke="#e22a42" stroke-width="1.450" fill="#051026"/><circle cx="1458" cy="603" r="3.15" stroke="#e22a42" stroke-width="1.450" fill="#051026"/><circle cx="1470.9" cy="603" r="3.15" stroke="#e22a42" stroke-width="1.450" fill="#051026"/><circle cx="1473.2" cy="603" r="3.15" stroke="#e22a42" stroke-width="1.450" fill="#051026"/><path d="M1455 609.2H1502" stroke="#19a9b4" stroke-width="1.100"/><path d="M1455 609.2L1452.300 663" stroke="#19a9b4" stroke-width="1.400"/><path d="M1471.700 609.2V663" stroke="#19a9b4" stroke-width="2.600"/><circle cx="1455" cy="609.2" r="3.15" stroke="#e22a42" stroke-width="1.450" fill="#051026"/><circle cx="1471.8" cy="609.2" r="3.15" stroke="#e22a42" stroke-width="1.450" fill="#051026"/><circle cx="1502" cy="609.2" r="3.15" stroke="#e22a42" stroke-width="1.450" fill="#051026"/><circle cx="1452" cy="663" r="3.15" stroke="#e22a42" stroke-width="1.450" fill="#051026"/><circle cx="1471.8" cy="663" r="3.15" stroke="#e22a42" stroke-width="1.450" fill="#051026"/><path d="M1458 669.2H1502" stroke="#19a9b4" stroke-width="1.100"/><path d="M1458 669.2L1457.300 723" stroke="#19a9b4" stroke-width="1.400"/><path d="M1472.300 669.2V723" stroke="#19a9b4" stroke-width="3"/><circle cx="1457.8" cy="669.2" r="3.15" stroke="#e22a42" stroke-width="1.450" fill="#051026"/><circle cx="1470.9" cy="669.2" r="3.15" stroke="#e22a42" stroke-width="1.450" fill="#051026"/><circle cx="1473.2" cy="669.2" r="3.15" stroke="#e22a42" stroke-width="1.450" fill="#051026"/><circle cx="1501.9" cy="669.2" r="3.15" stroke="#e22a42" stroke-width="1.450" fill="#051026"/><circle cx="1451.8" cy="723" r="3.15" stroke="#e22a42" stroke-width="1.450" fill="#051026"/><circle cx="1458" cy="723" r="3.15" stroke="#e22a42" stroke-width="1.450" fill="#051026"/><circle cx="1470.9" cy="723" r="3.15" stroke="#e22a42" stroke-width="1.450" fill="#051026"/><circle cx="1473.2" cy="723" r="3.15" stroke="#e22a42" stroke-width="1.450" fill="#051026"/><path d="M1455 729.2H1502" stroke="#19a9b4" stroke-width="1.100"/><path d="M1455 729.2L1452.300 783" stroke="#19a9b4" stroke-width="1.400"/><path d="M1471.700 729.2V783" stroke="#19a9b4" stroke-width="2.600"/><circle cx="1455" cy="729.2" r="3.15" stroke="#e22a42" stroke-width="1.450" fill="#051026"/><circle cx="1471.8" cy="729.2" r="3.15" stroke="#e22a42" stroke-width="1.450" fill="#051026"/><circle cx="1502" cy="729.2" r="3.15" stroke="#e22a42" stroke-width="1.450" fill="#051026"/><circle cx="1452" cy="783" r="3.15" stroke="#e22a42" stroke-width="1.450" fill="#051026"/><circle cx="1471.8" cy="783" r="3.15" stroke="#e22a42" stroke-width="1.450" fill="#051026"/><path d="M1458 789.2H1502" stroke="#19a9b4" stroke-width="1.100"/><path d="M1458 789.2L1457.300 843" stroke="#19a9b4" stroke-width="1.400"/><path d="M1472.300 789.2V843" stroke="#19a9b4" stroke-width="3"/><circle cx="1457.8" cy="789.2" r="3.15" stroke="#e22a42" stroke-width="1.450" fill="#051026"/><circle cx="1470.9" cy="789.2" r="3.15" stroke="#e22a42" stroke-width="1.450" fill="#051026"/><circle cx="1473.2" cy="789.2" r="3.15" stroke="#e22a42" stroke-width="1.450" fill="#051026"/><circle cx="1501.9" cy="789.2" r="3.15" stroke="#e22a42" stroke-width="1.450" fill="#051026"/><circle cx="1451.8" cy="843" r="3.15" stroke="#e22a42" stroke-width="1.450" fill="#051026"/><circle cx="1458" cy="843" r="3.15" stroke="#e22a42" stroke-width="1.450" fill="#051026"/><circle cx="1470.9" cy="843" r="3.15" stroke="#e22a42" stroke-width="1.450" fill="#051026"/><circle cx="1473.2" cy="843" r="3.15" stroke="#e22a42" stroke-width="1.450" fill="#051026"/><path d="M1455 849.2H1502" stroke="#19a9b4" stroke-width="1.100"/><path d="M1455 849.2L1452.300 903" stroke="#19a9b4" stroke-width="1.400"/><path d="M1471.700 849.2V903" stroke="#19a9b4" stroke-width="2.600"/><circle cx="1455" cy="849.2" r="3.15" stroke="#e22a42" stroke-width="1.450" fill="#051026"/><circle cx="1471.8" cy="849.2" r="3.15" stroke="#e22a42" stroke-width="1.450" fill="#051026"/><circle cx="1502" cy="849.2" r="3.15" stroke="#e22a42" stroke-width="1.450" fill="#051026"/><circle cx="1452" cy="903" r="3.15" stroke="#e22a42" stroke-width="1.450" fill="#051026"/><circle cx="1471.8" cy="903" r="3.15" stroke="#e22a42" stroke-width="1.450" fill="#051026"/></svg>
</div>
</body></html>
